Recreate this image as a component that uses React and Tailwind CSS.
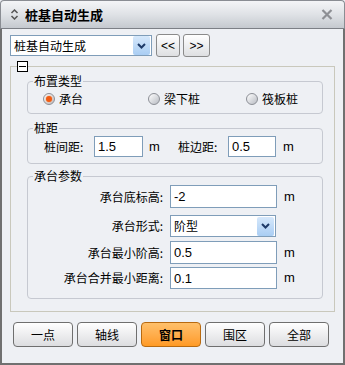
import React, { useState } from "react";

const font = { fontFamily: '"Noto Sans CJK SC", "Noto Sans", sans-serif' };
const latin = { fontFamily: '"Liberation Sans", sans-serif' };

const Radio = ({ checked, label, onClick, className }) => (
  <div className={`flex items-center gap-[4px] cursor-pointer ${className}`} onClick={onClick}>
    <span className="w-[12px] h-[12px] rounded-full border border-[#8c8f96] bg-gradient-to-br from-[#ffffff] to-[#b9bcc3] flex items-center justify-center">
      {checked && <span className="w-[6px] h-[6px] rounded-full bg-[#f05a12] shadow-[0_0_2px_#ff9a5a]" />}
    </span>
    <span className="text-[12px] leading-[14px] text-black">{label}</span>
  </div>
);

const TextBox = ({ value, className = "" }) => (
  <input
    type="text"
    defaultValue={value}
    className={`border border-[#7f9db9] bg-white px-[3px] text-[13px] text-black outline-none ${className}`}
    style={latin}
  />
);

const DropBtn = () => (
  <span className="w-[17px] h-[19px] flex items-center justify-center bg-gradient-to-b from-[#d6e8fb] to-[#a9cdf3] rounded-[2px]">
    <svg width="9" height="6" viewBox="0 0 9 6">
      <path d="M1 1 L4.5 4.5 L8 1" stroke="#1e3a68" strokeWidth="2" fill="none" />
    </svg>
  </span>
);

const Legend = ({ children }) => (
  <legend className="ml-[5px] px-[1px] text-[12px] leading-[14px] text-black">{children}</legend>
);

const Row = ({ label, children, unit = true, className = "" }) => (
  <div className={`flex items-center ${className}`}>
    <span className="w-[142px] text-right text-[12px] pr-[7px]">{label}</span>
    {children}
    {unit && <span className="ml-[7px] text-[13px]" style={latin}>m</span>}
  </div>
);

const Btn = ({ label, active }) => (
  <button
    className={`w-[60px] h-[25px] rounded-[4px] border text-[12px] ${
      active
        ? "border-[#b86a10] bg-gradient-to-b from-[#ffc06a] to-[#ff9a22] font-bold"
        : "border-[#6f6f6f] bg-gradient-to-b from-[#ffffff] to-[#dcdde0]"
    }`}
  >
    {label}
  </button>
);

export default function App() {
  const [layout, setLayout] = useState(0);
  return (
    <div className="w-[345px] h-[365px] flex flex-col bg-[#eef0f4] text-black overflow-hidden" style={font}>
      <div className="h-[29px] shrink-0 flex items-center px-[8px] rounded-t-[4px] border border-b-[#7c7f86] border-[#8a8d93] bg-gradient-to-b from-[#f4f5f7] via-[#dfe2e6] to-[#c5c9cf]">
        <svg width="9" height="11" viewBox="0 0 9 11" className="ml-[1px]">
          <path d="M1.5 4 L4.5 1 L7.5 4 M1.5 7 L4.5 10 L7.5 7" stroke="#555" strokeWidth="1.5" fill="none" />
        </svg>
        <span className="ml-[6px] text-[13px] font-bold">桩基自动生成</span>
        <svg width="12" height="11" viewBox="0 0 12 11" className="ml-auto mr-[3px]">
          <path d="M1.5 1 L10.5 10 M10.5 1 L1.5 10" stroke="#8d8f94" strokeWidth="2.2" />
        </svg>
      </div>

      <div className="flex-1 flex flex-col border-x-2 border-b-2 border-[#707070] px-[8px]">
        <div className="flex items-center mt-[5px] h-[23px]">
          <div className="w-[142px] h-[21px] border border-[#7f9db9] bg-white flex items-center pl-[3px] pr-[1px] text-[12px]">
            <span className="flex-1">桩基自动生成</span>
            <DropBtn />
          </div>
          <button className="ml-[4px] w-[24px] h-[23px] rounded-[3px] border border-[#8a8a8a] bg-gradient-to-b from-[#ffffff] to-[#dedfe2] text-[12px]" style={latin}>&lt;&lt;</button>
          <button className="ml-[3px] w-[27px] h-[23px] rounded-[3px] border border-[#8a8a8a] bg-gradient-to-b from-[#ffffff] to-[#dedfe2] text-[12px]" style={latin}>&gt;&gt;</button>
        </div>

        <fieldset className="mt-[4px] border border-[#c9c8bc] pb-[12px]">
          <legend className="ml-[6px]">
            <span className="w-[11px] h-[11px] border border-black bg-white flex items-center justify-center">
              <span className="w-[7px] h-[1px] bg-black" />
            </span>
          </legend>

          <fieldset className="mt-[2px] ml-[16px] mr-[11px] border border-[#c6c9d1] rounded-[4px] pt-[3px] pb-[6px]">
            <Legend>布置类型</Legend>
            <div className="flex items-center h-[16px] pl-[15px]">
              <Radio className="w-[105px]" checked={layout === 0} label="承台" onClick={() => setLayout(0)} />
              <Radio className="w-[98px]" checked={layout === 1} label="梁下桩" onClick={() => setLayout(1)} />
              <Radio checked={layout === 2} label="筏板桩" onClick={() => setLayout(2)} />
            </div>
          </fieldset>

          <fieldset className="mt-[7px] ml-[16px] mr-[11px] border border-[#c6c9d1] rounded-[4px] pt-[1px] pb-[6px]">
            <Legend>桩距</Legend>
            <div className="flex items-center h-[21px] pl-[16px] text-[12px]">
              <span className="w-[50px]">桩间距:</span>
              <TextBox value="1.5" className="w-[49px] h-[21px]" />
              <span className="ml-[6px] w-[29px] text-[13px]" style={latin}>m</span>
              <span className="w-[50px]">桩边距:</span>
              <TextBox value="0.5" className="w-[48px] h-[21px]" />
              <span className="ml-[7px] text-[13px]" style={latin}>m</span>
            </div>
          </fieldset>

          <fieldset className="mt-[5px] ml-[16px] mr-[11px] border border-[#c6c9d1] rounded-[4px] pt-[2px] pb-[9px]">
            <Legend>承台参数</Legend>
            <Row label="承台底标高:">
              <TextBox value="-2" className="w-[107px] h-[23px]" />
            </Row>
            <Row label="承台形式:" unit={false} className="mt-[7px]">
              <div className="w-[106px] h-[22px] border border-[#7f9db9] bg-white flex items-center pl-[3px] pr-[1px] text-[12px]">
                <span className="flex-1">阶型</span>
                <DropBtn />
              </div>
            </Row>
            <Row label="承台最小阶高:" className="mt-[4px]">
              <TextBox value="0.5" className="w-[107px] h-[23px]" />
            </Row>
            <Row label="承台合并最小距离:" className="mt-[3px]">
              <TextBox value="0.1" className="w-[107px] h-[22px]" />
            </Row>
          </fieldset>
        </fieldset>

        <div className="flex gap-[4px] mt-[10px] ml-[3px]">
          <Btn label="一点" />
          <Btn label="轴线" />
          <Btn label="窗口" active />
          <Btn label="围区" />
          <Btn label="全部" />
        </div>
      </div>
    </div>
  );
}
